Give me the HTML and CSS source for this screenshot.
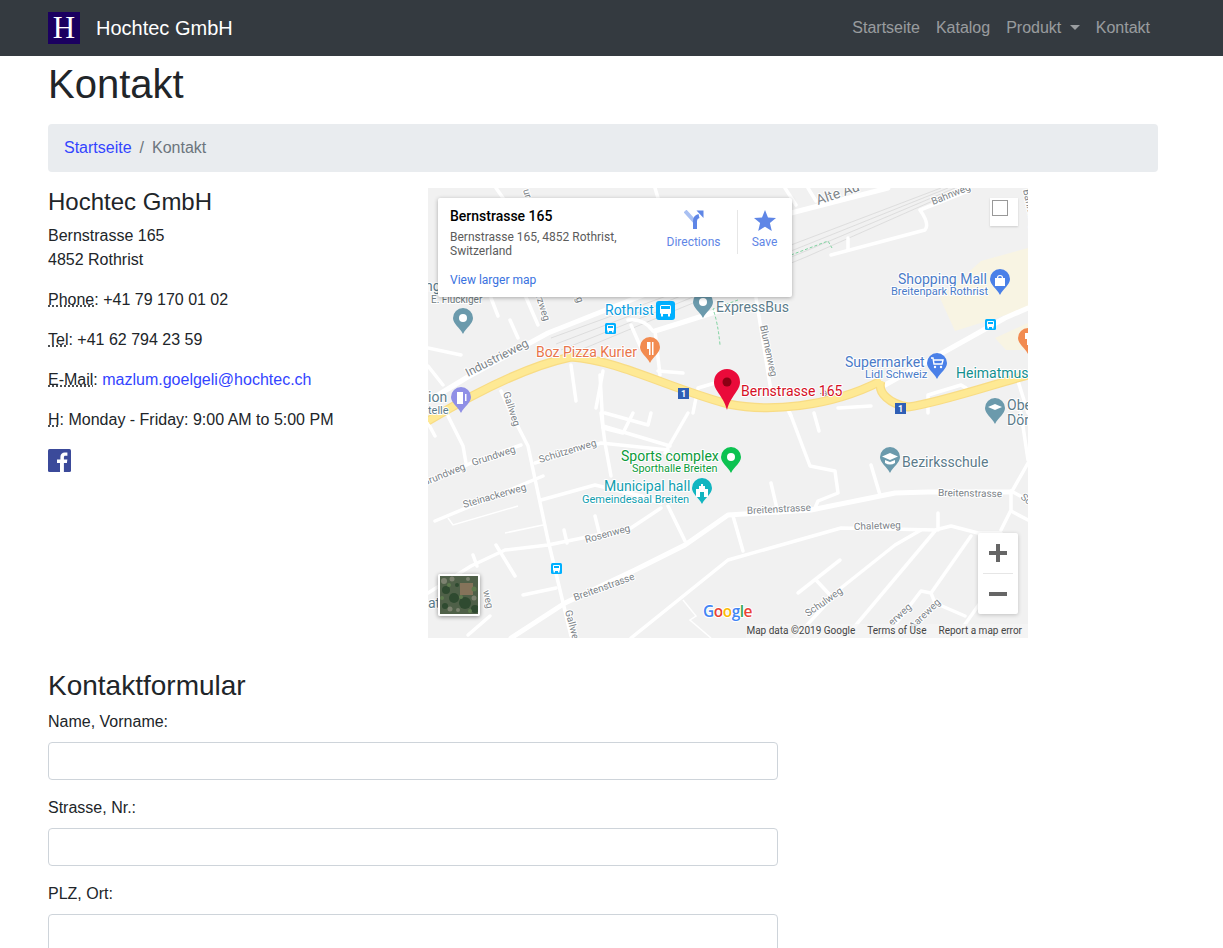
FILE: index.html
```html
<!DOCTYPE html>
<html lang="de">
<head>
  <meta charset="UTF-8" />
  <meta name="viewport" content="width=device-width, initial-scale=1.0"/>
  <title>Kontakt - Hochtec GmbH</title>
  <link rel="stylesheet" href="styles.css">
</head>
<body>
  <nav class="navbar">
    <a class="brand" href="#">
      <span class="brand-logo">H</span>
      <span class="brand-name">Hochtec GmbH</span>
    </a>
    <ul class="nav-links">
      <li><a href="#">Startseite</a></li>
      <li><a href="#">Katalog</a></li>
      <li><a href="#">Produkt <span class="caret"></span></a></li>
      <li><a href="#">Kontakt</a></li>
    </ul>
  </nav>

  <main class="container">
    <h1>Kontakt</h1>

    <ol class="breadcrumb">
      <li><a href="#">Startseite</a></li>
      <li class="sep">/</li>
      <li class="active">Kontakt</li>
    </ol>

    <div class="contact-row">
      <div class="contact-details">
        <h4>Hochtec GmbH</h4>
        <p>Bernstrasse 165<br>4852 Rothrist</p>
        <p><abbr title="Phone">Phone</abbr>: +41 79 170 01 02</p>
        <p><abbr title="Telefon">Tel</abbr>: +41 62 794 23 59</p>
        <p><abbr title="E-Mail">E-Mail</abbr>: <a href="#">mazlum.goelgeli@hochtec.ch</a></p>
        <p><abbr title="Hours">H</abbr>: Monday - Friday: 9:00 AM to 5:00 PM</p>
        <a class="fb" href="#" aria-label="Facebook">
          <svg width="23" height="23" viewBox="0 0 23 23">
            <rect width="23" height="23" rx="1.5" fill="#3b4a9a"/>
            <path fill="#fff" d="M15.9 23v-8.9h3l.45-3.5h-3.45V8.4c0-1 .3-1.7 1.7-1.7h1.8V3.6c-.3 0-1.4-.1-2.6-.1-2.6 0-4.4 1.6-4.4 4.5v2.6H9v3.5h3V23z"/>
          </svg>
        </a>
      </div>

      <div class="map">
        <svg class="map-canvas" width="600" height="450" viewBox="0 0 600 450">
          <defs>
            <symbol id="pin" viewBox="0 0 20 30" overflow="visible">
              <path d="M10 0a10 10 0 0 1 10 10c0 6-6.500 9-10 16C6.500 19 0 16 0 10A10 10 0 0 1 10 0z"/>
            </symbol>
            <g id="bus">
              <rect width="11" height="11" rx="1.500" fill="#00b0ff"/>
              <rect x="2" y="2" width="7" height="6" rx="1" fill="#fff"/>
              <rect x="3" y="3" width="5" height="2" fill="#00b0ff"/>
              <rect x="2.500" y="8" width="1.500" height="1.500" fill="#fff"/>
              <rect x="7" y="8" width="1.500" height="1.500" fill="#fff"/>
            </g>
            <g id="shield">
              <rect width="11" height="11" fill="#2f5fb5"/>
              <text x="5.500" y="8.800" class="shield-text">1</text>
            </g>
          </defs>

          <rect width="600" height="450" fill="#f1f1f1"/>
          <polygon points="553,73 600,60 600,120 527,143 512,110" fill="#f8f4e3"/>
          <polygon points="567,150 600,135 600,162 578,162" fill="#f8f4e3"/>

          <g class="rail">
            <path d="M123 150 L233 110 L363 57 L513 0"/>
            <path d="M128 156 L238 114 L368 61 L520 0"/>
            <path d="M133 162 L243 118 L373 65 L527 0"/>
            <path d="M138 168 L248 122 L378 69 L534 0"/>
          </g>

          <g class="road">
            <path class="wide" d="M0 213 L38 190 L120 145 L233 100"/>
            <path class="wide" d="M363 25 L460 0"/>
            <path class="wide" d="M227 143 L300 120"/>
            <path class="wide" d="M457 197 L577 130 L600 120"/>
            <path class="wide" d="M83 450 L137 415 L207 382 L257 357 L300 327 L383 322 L467 305 L500 304 L583 304"/>
            <path d="M68 0 L75 10"/>
            <path d="M227 0 L230 10"/>
            <path d="M357 0 L368 17"/>
            <path d="M380 0 L388 13"/>
            <path d="M403 67 L497 42 Q502 36 492 22 L540 3"/>
            <path d="M420 50 L420 62"/>
            <path d="M0 160 L33 167"/>
            <path d="M0 178 L15 197"/>
            <path d="M63 110 L70 128"/>
            <path d="M82 132 L90 150"/>
            <path d="M97 107 L110 137"/>
            <path d="M143 177 L148 213"/>
            <path d="M175 183 L168 220"/>
            <path d="M230 183 L255 185"/>
            <path d="M203 137 L213 160"/>
            <path d="M200 132 Q216 130 225 143"/>
            <path d="M227 143 L232 187"/>
            <path d="M265 225 L270 200 L287 195"/>
            <path d="M328 110 L343 203"/>
            <path d="M360 222 L363 228"/>
            <path d="M410 220 L443 218"/>
            <path d="M500 225 L500 207 L533 197 L538 200"/>
            <path d="M590 193 L600 225"/>
            <path d="M73 203 L83 225 L100 258 L120 352 L143 448"/>
            <path d="M20 228 L35 258 L38 275"/>
            <path d="M0 235 L7 248"/>
            <path d="M0 295 L43 275 L93 257"/>
            <path d="M107 275 L173 255 L240 262"/>
            <path d="M175 238 L242 258"/>
            <path d="M177 225 L220 237 L223 225"/>
            <path d="M173 225 L177 255 L183 288"/>
            <path d="M260 225 L237 265"/>
            <path d="M172 187 L175 240 L195 245 L205 225"/>
            <path d="M113 312 L167 297 L213 308 L233 315"/>
            <path d="M0 405 L43 378 L77 362 L120 357 L203 340 L233 320"/>
            <path d="M240 318 L257 353"/>
            <path d="M167 328 L172 348"/>
            <path d="M136 342 L139 355"/>
            <path d="M68 357 L87 388"/>
            <path d="M45 367 L49 378"/>
            <path d="M115 288 L7 333"/>
            <path d="M95 407 L128 400"/>
            <path d="M40 447 L62 428"/>
            <path d="M203 450 L300 372 L413 340 L507 342 L523 338 L550 345 L573 345"/>
            <path d="M362 225 L382 278 L407 283 L410 305 L390 313 L387 320"/>
            <path d="M386 225 L391 243"/>
            <path d="M343 295 L350 325"/>
            <path d="M443 277 L452 307"/>
            <path d="M305 328 L315 363"/>
            <path d="M510 325 L510 342"/>
            <path d="M370 405 L412 372"/>
            <path d="M388 392 L402 407"/>
            <path d="M367 450 L413 400 L467 357 L493 342"/>
            <path d="M417 450 L507 343"/>
            <path d="M543 348 L503 405"/>
            <path d="M457 450 L493 403 L503 405 L507 415 L537 428"/>
            <path d="M573 342 L583 322 L583 305 L600 275"/>
            <path d="M583 323 L600 332"/>
            <path d="M583 303 L600 312"/>
            <path d="M593 225 L600 272"/>
            <path d="M533 442 L557 408"/>
          </g>
          <g class="road-thin">
            <path d="M20 330 L25 337 L90 318"/>
            <path d="M77 345 L115 337"/>
            <path d="M255 412 L268 428 L262 432 L283 450"/>
          </g>
          <path class="path-green" d="M310 112 L285 121 Q290 135 292 157 M363 67 L400 53 L404 60"/>

          <g class="main-road">
            <path class="main-edge" d="M0 233 C30 215 90 180 143 169 C190 172 240 200 300 216 C340 224 400 220 453 193 M600 187 C560 198 510 215 480 219 C462 216 449 205 453 193"/>
            <path class="main-fill" d="M0 233 C30 215 90 180 143 169 C190 172 240 200 300 216 C340 224 400 220 453 193 M600 187 C560 198 510 215 480 219 C462 216 449 205 453 193"/>
          </g>
          <path d="M392 205.500 L400 205.500 M396 202.500 L400 205.500 L396 208.500" stroke="#a89a9a" fill="none" stroke-width="1.200"/>

          <use href="#shield" x="250" y="200"/>
          <use href="#shield" x="467" y="215"/>
          <use href="#bus" x="177" y="135"/>
          <use href="#bus" x="557" y="131"/>
          <use href="#bus" x="123" y="375"/>
          <rect x="228" y="113" width="19" height="19" rx="3" fill="#00b0ff"/>
          <rect x="232" y="117" width="11" height="9" rx="1.500" fill="#fff"/>
          <rect x="233" y="118" width="9" height="3" fill="#00b0ff"/>
          <rect x="233" y="126" width="2" height="2.500" fill="#fff"/>
          <rect x="240" y="126" width="2" height="2.500" fill="#fff"/>

          <g fill="#6b9aac">
            <use href="#pin" x="25" y="120" width="20" height="30"/>
            <use href="#pin" x="265" y="104" width="20" height="30"/>
            <use href="#pin" x="557" y="210" width="20" height="30"/>
            <use href="#pin" x="452" y="259" width="20" height="30"/>
          </g>
          <circle cx="35" cy="130" r="4" fill="#fff"/>
          <circle cx="275" cy="114" r="4" fill="#fff"/>
          <path d="M567 216l7 3-7 3-7-3z" fill="#fff"/>
          <path d="M462 265l8 3.500-8 3.500-8-3.500z M457 272v3q5 3 10 0v-3l-5 2z" fill="#fff"/>

          <use href="#pin" x="212" y="149" width="20" height="30" fill="#f28b50"/>
          <path d="M219 154v7h2v6h1.500v-13z M224 154h1.500v13H224z" fill="#fff"/>
          <use href="#pin" x="590" y="140" width="20" height="30" fill="#f28b50"/>
          <path d="M597 145v6h2v6h1.500v-12z" fill="#fff"/>
          <use href="#pin" x="23" y="199" width="20" height="30" fill="#8f8fe6"/>
          <path d="M29 204h6v12h-6z M37 206h1.500v7H37z" fill="#fff"/>
          <use href="#pin" x="562" y="81" width="20" height="30" fill="#4a80e8"/>
          <path d="M567 90h10v8h-10z" fill="#fff"/>
          <path d="M569.500 90a2.500 2.500 0 0 1 5 0" fill="none" stroke="#fff" stroke-width="1.200"/>
          <use href="#pin" x="499" y="165" width="20" height="30" fill="#4a80e8"/>
          <path d="M503 170h2l1 6h8l1-4h-9" fill="none" stroke="#fff" stroke-width="1.400"/>
          <circle cx="507" cy="179" r="1.200" fill="#fff"/>
          <circle cx="513" cy="179" r="1.200" fill="#fff"/>
          <use href="#pin" x="293" y="259" width="20" height="30" fill="#0cc251"/>
          <circle cx="303" cy="269" r="4" fill="#fff"/>
          <use href="#pin" x="264" y="290" width="20" height="30" fill="#12b5c0"/>
          <path d="M268 309v-8h3v-3h2v-2h2v2h2v3h3v8z" fill="#fff"/>
          <rect x="272" y="304" width="4" height="5" fill="#12b5c0"/>

          <text class="l-road" transform="translate(390 17) rotate(-19)" font-size="14">Alte Au</text>
          <text class="l-road small" transform="translate(505 17) rotate(-22)">Bahnweg</text>
          <text class="l-road small" transform="translate(595 2) rotate(78)">Bahnweg</text>
          <text class="l-road small" transform="translate(332 138) rotate(78)">Blumenweg</text>
          <text class="l-road small" transform="translate(95 2) rotate(75)">urg</text>
          <text class="l-road small" transform="translate(104 97) rotate(72)">Kurzweg</text>
          <text class="l-road small" transform="translate(146 105) rotate(72)">eg</text>
          <text class="l-road" transform="translate(40 189) rotate(-27)" font-size="12">Industrieweg</text>
          <text class="l-road small" transform="translate(75 205) rotate(72)">Gallweg</text>
          <text class="l-road small" transform="translate(-4 298) rotate(-22)">Grundweg</text>
          <text class="l-road small" transform="translate(45 278) rotate(-18)">Grundweg</text>
          <text class="l-road small" transform="translate(112 275) rotate(-17)">Schützenweg</text>
          <text class="l-road small" transform="translate(36 320) rotate(-16)">Steinackerweg</text>
          <text class="l-road small" transform="translate(158 355) rotate(-15)">Rosenweg</text>
          <text class="l-road small" transform="translate(147 413) rotate(-20)">Breitenstrasse</text>
          <text class="l-road small" transform="translate(319 326) rotate(-3)">Breitenstrasse</text>
          <text class="l-road small" transform="translate(510 308) rotate(1)">Breitenstrasse</text>
          <text class="l-road small" transform="translate(426 342) rotate(-2)">Chaletweg</text>
          <text class="l-road small" transform="translate(380 429) rotate(-35)">Schulweg</text>
          <text class="l-road small" transform="translate(137 423) rotate(75)">Gallweg</text>
          <text class="l-road small" transform="translate(55 403) rotate(78)">weg</text>
          <text class="l-road small" transform="translate(464 438) rotate(-42)">erweg</text>
          <text class="l-road small" transform="translate(485 442) rotate(-44)">Aareweg</text>
          <text class="l-road small" transform="translate(592 310) rotate(40)">Sc</text>

          <text class="l-poi" x="470" y="96" font-size="14" fill="#4a7bc8">Shopping Mall</text>
          <text class="l-poi" x="463" y="107" font-size="11" fill="#4a7bc8">Breitenpark Rothrist</text>
          <text class="l-poi" x="417" y="179" font-size="14" fill="#4a7bc8">Supermarket</text>
          <text class="l-poi" x="437" y="190" font-size="11.300" fill="#4a7bc8">Lidl Schweiz</text>
          <text class="l-poi" x="528" y="190" font-size="14" fill="#12908f">Heimatmus</text>
          <text class="l-poi" x="313" y="208" font-size="14" fill="#d50f25">Bernstrasse 165</text>
          <text class="l-poi" x="579" y="222" font-size="14" fill="#5b7b8a">Obe</text>
          <text class="l-poi" x="579" y="237" font-size="14" fill="#5b7b8a">Dör</text>
          <text class="l-poi" x="474" y="279" font-size="14" fill="#5b7b8a">Bezirksschule</text>
          <text class="l-poi" x="193" y="273" font-size="14" fill="#0b9a3a">Sports complex</text>
          <text class="l-poi" x="204" y="284" font-size="10.800" fill="#0b9a3a">Sporthalle Breiten</text>
          <text class="l-poi" x="176" y="303" font-size="14" fill="#129eaf">Municipal hall</text>
          <text class="l-poi" x="154" y="315" font-size="11" fill="#129eaf">Gemeindesaal Breiten</text>
          <text class="l-poi" x="177" y="127" font-size="14" fill="#0a9de0">Rothrist</text>
          <text class="l-poi" x="288" y="124" font-size="14" fill="#5b7b8a">ExpressBus</text>
          <text class="l-poi" x="108" y="169" font-size="14" fill="#e8754a">Boz Pizza Kurier</text>
          <text class="l-poi" x="3" y="115" font-size="10" fill="#6f7b80">E. Flückiger</text>
          <text class="l-poi" x="-3" y="103" font-size="14" fill="#5b7b8a">ng</text>
          <text class="l-poi" x="0" y="214" font-size="14" fill="#5b7b8a">ion</text>
          <text class="l-poi" x="0" y="226" font-size="11" fill="#5b7b8a">telle</text>
          <text class="l-poi" x="0" y="420" font-size="14" fill="#5b7b8a">at</text>

          <path d="M299 181a13 13 0 0 1 13 13c0 9-9 13-13 28-4-15-13-19-13-28a13 13 0 0 1 13-13z" fill="#ea0a3a"/>
          <circle cx="299" cy="194" r="4.500" fill="#8c0014"/>

          <text class="google" x="275" y="429"><tspan fill="#4285f4">G</tspan><tspan fill="#ea4335">o</tspan><tspan fill="#fbbc05">o</tspan><tspan fill="#4285f4">g</tspan><tspan fill="#34a853">l</tspan><tspan fill="#ea4335">e</tspan></text>
        </svg>

        <div class="place-card">
          <div class="place-info">
            <div class="place-name">Bernstrasse 165</div>
            <div class="place-address">Bernstrasse 165, 4852 Rothrist, Switzerland</div>
            <a class="place-link" href="#">View larger map</a>
          </div>
          <div class="place-action directions">
            <svg width="20" height="20" viewBox="0 0 20 20">
              <path d="M1 1 L11 12 V19" fill="none" stroke="#a9c0f2" stroke-width="4"/>
              <path d="M11 19 V11 Q11 7 15 6" fill="none" stroke="#5f86e6" stroke-width="4"/>
              <path d="M12.500 0.500 H19.500 V8 Z" fill="#5f86e6"/>
            </svg>
            <span>Directions</span>
          </div>
          <div class="place-action save">
            <svg width="22" height="21" viewBox="0 0 22 21">
              <path d="M11 0l3 7.400 8 .6-6.100 5.100 1.900 7.900L11 16.700 4.200 21l1.900-7.900L0 8l8-.6z" fill="#5f86e6"/>
            </svg>
            <span>Save</span>
          </div>
        </div>

        <div class="fullscreen"><span class="fullscreen-box"></span></div>

        <div class="zoom-control">
          <div class="zoom-btn"><svg width="18" height="18" viewBox="0 0 18 18"><path d="M7 0h4v7h7v4h-7v7H7v-7H0V7h7z" fill="#666"/></svg></div>
          <div class="zoom-divider"></div>
          <div class="zoom-btn"><svg width="18" height="4" viewBox="0 0 18 4"><rect width="18" height="4" fill="#666"/></svg></div>
        </div>

        <div class="sat-thumb">
          <svg width="38" height="38" viewBox="0 0 38 38">
            <rect width="38" height="38" fill="#4f6048"/>
            <rect x="20" y="7" width="13" height="12" fill="#85735a"/>
            <g fill="#2f4a30">
              <circle cx="6" cy="14" r="4"/>
              <circle cx="14" cy="22" r="5"/>
              <circle cx="25" cy="27" r="6"/>
              <circle cx="35" cy="33" r="4"/>
              <circle cx="5" cy="30" r="3"/>
              <circle cx="17" cy="9" r="2"/>
            </g>
            <g fill="#7d8270">
              <circle cx="4" cy="5" r="3"/>
              <circle cx="12" cy="3" r="2.500"/>
              <circle cx="10" cy="33" r="2.500"/>
              <circle cx="34" cy="22" r="2.500"/>
              <circle cx="18" cy="34" r="2"/>
              <circle cx="28" cy="3" r="2"/>
            </g>
            <g fill="#5e7a4e">
              <circle cx="9" cy="9" r="2"/>
              <circle cx="34" cy="13" r="2.500"/>
              <circle cx="21" cy="21" r="2"/>
              <circle cx="2" cy="22" r="2"/>
              <circle cx="30" cy="35" r="2"/>
            </g>
          </svg>
        </div>

        <div class="map-footer">
          <span>Map data ©2019 Google</span>
          <span>Terms of Use</span>
          <span>Report a map error</span>
        </div>
      </div>
    </div>

    <h3>Kontaktformular</h3>
    <form class="contact-form">
      <div class="form-group">
        <label for="name">Name, Vorname:</label>
        <input id="name" type="text">
      </div>
      <div class="form-group">
        <label for="street">Strasse, Nr.:</label>
        <input id="street" type="text">
      </div>
      <div class="form-group">
        <label for="city">PLZ, Ort:</label>
        <input id="city" type="text">
      </div>
    </form>
  </main>
</body>
</html>
```

FILE: styles.css
```css
* {
  box-sizing: border-box;
}

html, body {
  height: 948px;
  overflow: hidden;
}

body {
  margin: 0;
  font-family: "Liberation Sans", Arial, sans-serif;
  font-size: 16px;
  line-height: 1.5;
  color: #212529;
  background: #fff;
}

a {
  color: #3344ff;
  text-decoration: none;
}

/* navbar */
.navbar {
  display: flex;
  align-items: center;
  justify-content: space-between;
  height: 56px;
  padding: 0 65px 0 48px;
  background-color: #343a40;
}

.brand {
  display: flex;
  align-items: center;
  color: #fff;
}

.brand-logo {
  width: 32px;
  height: 32px;
  margin-right: 16px;
  background: #1b0060;
  color: #fff;
  font-family: "Liberation Serif", serif;
  font-size: 31px;
  line-height: 32px;
  text-align: center;
}

.brand-name {
  font-size: 20px;
}

.nav-links {
  display: flex;
  margin: 0;
  padding: 0;
  list-style: none;
}

.nav-links a {
  display: block;
  padding: 8px;
  color: rgba(255, 255, 255, 0.5);
}

.caret {
  display: inline-block;
  margin-left: 4px;
  vertical-align: 3px;
  border-top: 5px solid;
  border-right: 5px solid transparent;
  border-left: 5px solid transparent;
}

/* page */
.container {
  width: 1110px;
  margin-left: 48px;
  padding-top: 4px;
}

h1 {
  margin: 0 0 16px;
  font-size: 40px;
  font-weight: 400;
  line-height: 1.2;
}

h3 {
  margin: 0 0 7px;
  font-size: 28px;
  font-weight: 400;
  line-height: 1.2;
}

h4 {
  margin: 0 0 7px;
  font-size: 24px;
  font-weight: 400;
  line-height: 1.2;
}

.breadcrumb {
  display: flex;
  gap: 8px;
  margin: 0 0 16px;
  padding: 12px 16px;
  list-style: none;
  background-color: #e9ecef;
  border-radius: 4px;
}

.breadcrumb .sep,
.breadcrumb .active {
  color: #6c757d;
}

.contact-row {
  display: flex;
  margin-bottom: 31px;
}

.contact-details {
  width: 380px;
}

.contact-details p {
  margin: 0 0 16px;
}

abbr {
  text-decoration: underline dotted;
  cursor: help;
}

.fb {
  display: block;
  width: 23px;
  height: 24px;
  padding-top: 1px;
}

.fb svg {
  display: block;
}

/* map */
.map {
  position: relative;
  width: 600px;
  height: 450px;
  overflow: hidden;
  font-family: Roboto, Arial, sans-serif;
}

.map-canvas {
  display: block;
}

.rail path {
  fill: none;
  stroke: #d8d8d8;
  stroke-width: 0.8;
}

.road path {
  fill: none;
  stroke: #fff;
  stroke-width: 3.5;
  stroke-linecap: round;
  stroke-linejoin: round;
}

.road path.wide {
  stroke-width: 5;
}

.road-thin path {
  fill: none;
  stroke: #fff;
  stroke-width: 1.5;
}

.path-green {
  fill: none;
  stroke: #7fd3a0;
  stroke-width: 1;
  stroke-dasharray: 3 2;
}

.main-road path {
  fill: none;
  stroke-linejoin: round;
}

.main-road .main-edge {
  stroke: #f8dc85;
  stroke-width: 9;
}

.main-road .main-fill {
  stroke: #fee994;
  stroke-width: 6.5;
}

.shield-text {
  font-family: Roboto, sans-serif;
  font-size: 9px;
  font-weight: 700;
  fill: #fff;
  text-anchor: middle;
}

.l-road,
.l-poi,
.google {
  paint-order: stroke;
  stroke: #fff;
  stroke-width: 2px;
  stroke-linejoin: round;
}

.l-road {
  fill: #7c8388;
}

.l-road.small {
  font-size: 10px;
}

.google {
  font-family: "Open Sans", Roboto, sans-serif;
  font-size: 15.5px;
  font-weight: 600;
  letter-spacing: -0.5px;
}

.place-card {
  position: absolute;
  top: 10px;
  left: 10px;
  display: flex;
  width: 354px;
  height: 99px;
  background: #fff;
  border-radius: 2px;
  box-shadow: 0 1px 4px rgba(0, 0, 0, 0.3);
}

.place-info {
  width: 215px;
  padding: 10px 0 0 12px;
}

.place-name {
  font-size: 14px;
  font-weight: 500;
  line-height: 17px;
  color: #000;
}

.place-address {
  margin-top: 5px;
  font-size: 12px;
  line-height: 14px;
  color: #5b5b5b;
}

.place-link {
  display: block;
  margin-top: 15px;
  font-size: 12px;
  line-height: 14px;
  color: #3a72e0;
}

.place-action {
  display: flex;
  flex-direction: column;
  align-items: center;
  height: 44px;
  margin-top: 12px;
  font-size: 12px;
  line-height: 14px;
  color: #5f86e6;
}

.place-action svg {
  display: block;
  margin-bottom: 4px;
}

.directions {
  width: 81px;
  margin-right: 3px;
}

.directions svg {
  margin-bottom: 5px;
}

.save {
  width: 55px;
  padding-right: 1px;
  border-left: 1px solid #e6e6e6;
}

.fullscreen {
  position: absolute;
  top: 10px;
  left: 562px;
  width: 28px;
  height: 28px;
  padding: 2px;
  background: #fff;
  box-shadow: 0 1px 2px rgba(0, 0, 0, 0.15);
}

.fullscreen-box {
  display: block;
  width: 16px;
  height: 16px;
  border: 1px solid #999;
}

.zoom-control {
  position: absolute;
  top: 345px;
  left: 550px;
  width: 40px;
  height: 81px;
  background: #fff;
  border-radius: 2px;
  box-shadow: 0 1px 4px rgba(0, 0, 0, 0.2);
}

.zoom-btn {
  display: flex;
  align-items: center;
  justify-content: center;
  height: 40px;
}

.zoom-btn svg {
  display: block;
}

.zoom-divider {
  height: 1px;
  margin: 0 5px;
  background: #e6e6e6;
}

.sat-thumb {
  position: absolute;
  top: 386px;
  left: 10px;
  width: 42px;
  height: 42px;
  border: 2px solid #fff;
  border-radius: 2px;
  box-shadow: 0 1px 4px rgba(0, 0, 0, 0.4);
}

.sat-thumb svg {
  display: block;
}

.map-footer {
  position: absolute;
  right: 0;
  bottom: 0;
  display: flex;
  gap: 12px;
  height: 14px;
  padding: 0 6px 0 0;
  font-size: 10px;
  line-height: 14px;
  color: #444;
  background: rgba(245, 245, 245, 0.7);
}

/* form */
.contact-form {
  width: 730px;
}

.form-group {
  margin-bottom: 16px;
}

.form-group label {
  display: block;
  margin-bottom: 8px;
}

.form-group input {
  display: block;
  width: 100%;
  height: 38px;
  padding: 6px 12px;
  font-size: 16px;
  color: #495057;
  background: #fff;
  border: 1px solid #ced4da;
  border-radius: 4px;
}
```
